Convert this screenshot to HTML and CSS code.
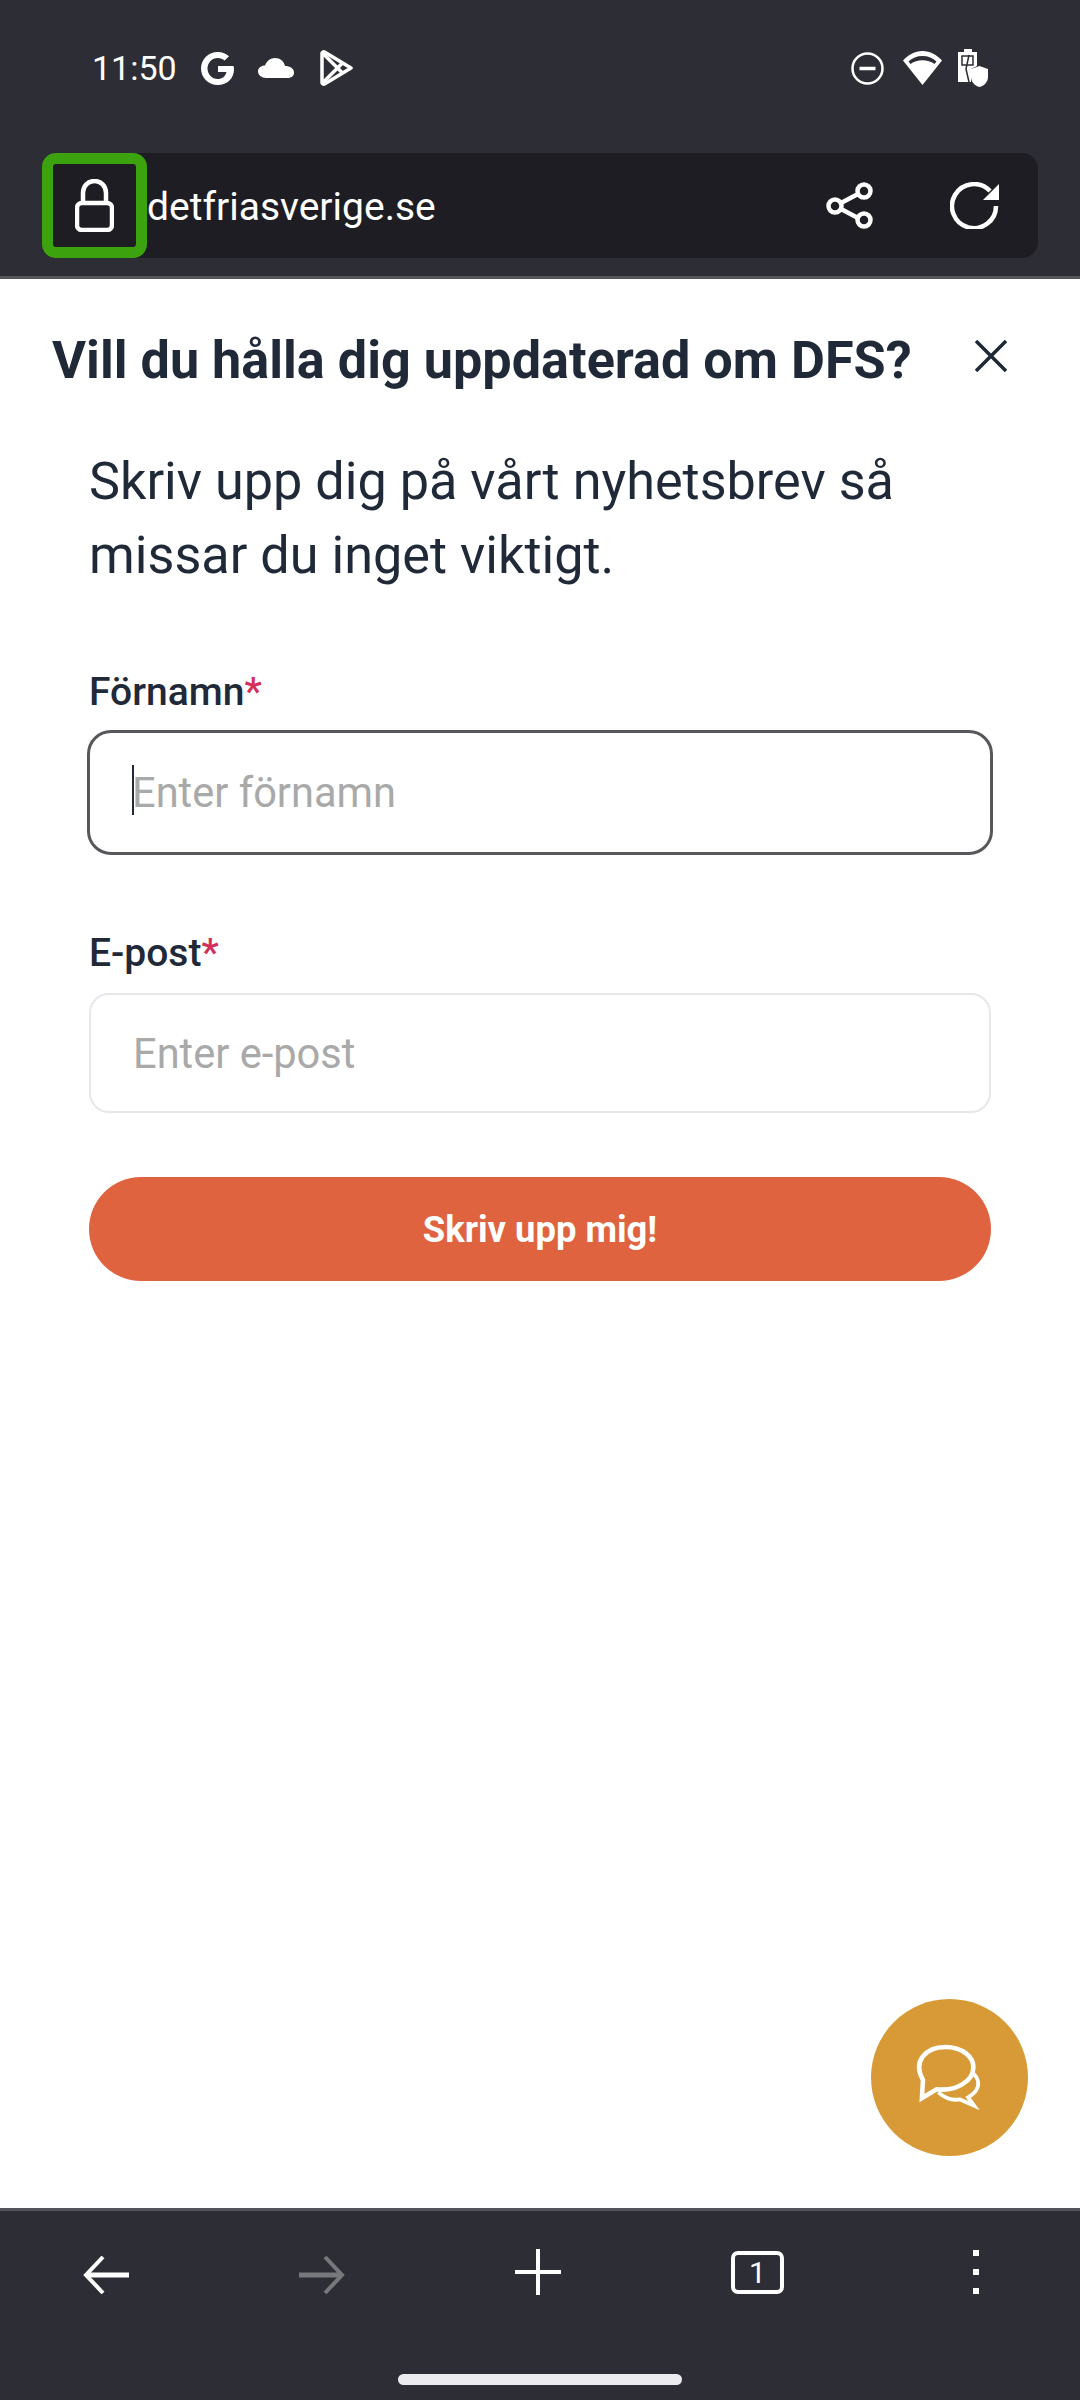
FILE: index.html
```html
<!DOCTYPE html>
<html>
<head>
    <title>detfriasverige.se</title>
    <link rel="stylesheet" href="styles.css">
</head>
<body>
<div class="phone">
    <header class="topbar">
        <div class="status">
            <span class="time">11:50</span>
            <svg class="ic-g" viewBox="0 0 33 33"><path d="M31.500 14H17v6h8.500C24 25 20.800 27 16.800 27 11 27 6.500 22.300 6.500 16.500S11 6 16.800 6c2.800 0 5 1 6.900 2.600l4.300-4.300C25.300 1.800 21.400 0 16.800 0 7.500 0 0 7.400 0 16.500S7.500 33 16.800 33C26.300 33 33 26.400 33 17c0-1-.2-2-.5-3z" fill="#fff"/></svg>
            <svg class="ic-cloud" viewBox="0 0 36 20"><path d="M8 20C3.500 20 0 17 0 13.500S3 7.500 7 7.500C8.500 3 12.500 0 17 0c5 0 9 3 10 8 5 0 9 2.500 9 6.500S33 20 29 20z" fill="#fff"/></svg>
            <svg class="ic-play" viewBox="0 0 33 36" fill="none" stroke="#fff" stroke-width="3.500" stroke-linejoin="round"><path d="M2 3.500C2 2 3.500 1.500 4.500 2L31 18 4.500 34C3.500 34.500 2 34 2 32.500z"/><path d="M2.500 3l20 20M2.500 33l20-20"/></svg>
            <div class="status-right">
                <svg class="ic-dnd" viewBox="0 0 33 33" fill="none" stroke="#fff" stroke-width="2.500"><circle cx="16.500" cy="16.500" r="15"/><path d="M8.500 16.500h16" stroke-width="3.500"/></svg>
                <svg class="ic-wifi" viewBox="0 0 39 34"><path d="M19.500 34L0 9.500C5 4 12 0 19.500 0S34 4 39 9.500zM19.500 5C14 5 9 7 5.500 10.500l2 2.500C11 10.500 15 9.300 19.500 9.300s8.500 1.200 12 3.700l2-2.500C30 7 25 5 19.500 5z" fill="#fff" fill-rule="evenodd"/></svg>
                <svg class="ic-batt" viewBox="0 0 30 38"><path d="M6 0h8v3h5v14l-6 3v13H0V3h6z" fill="#fff"/><path d="M4 7h11v9H4z" fill="none" stroke="#2d2d35" stroke-width="1.500"/><path d="M11 6L8 20l3 13" fill="none" stroke="#2d2d35" stroke-width="1.500"/><path d="M21.500 17L30 20v8c0 5-4 9-8.500 10C17 37 13 33 13 28v-8z" fill="#fff"/></svg>
            </div>
        </div>
        <div class="addressbar">
            <div class="lockbox">
                <svg class="ic-lock" viewBox="0 0 39 53" fill="none" stroke="#fff" stroke-width="4.500"><rect x="2" y="24" width="35" height="27" rx="5"/><path d="M8 24V14C8 7 13 2 19.500 2S31 7 31 14V24"/></svg>
            </div>
            <span class="url">detfriasverige.se</span>
            <svg class="ic-share" viewBox="0 0 47 47" fill="none" stroke="#fff" stroke-width="4.500"><circle cx="9" cy="24" r="6.500"/><circle cx="38" cy="9" r="6.500"/><circle cx="38" cy="38" r="6.500"/><path d="M15 21l17-9M15 27l17 9"/></svg>
            <svg class="ic-reload" viewBox="0 0 51 47" fill="none"><path d="M40 9A22 22 0 1 0 46 24" stroke="#fff" stroke-width="4.500"/><path d="M49 2V18H33z" fill="#fff"/></svg>
        </div>
    </header>

    <main class="content">
        <div class="modal-head">
            <h2 class="title">Vill du hålla dig uppdaterad om DFS?</h2>
            <svg class="ic-close" viewBox="0 0 32 32" fill="none" stroke="#1f2937" stroke-width="3.500"><path d="M1 1l30 30M31 1L1 31"/></svg>
        </div>
        <form class="signup">
            <p class="lead">Skriv upp dig på vårt nyhetsbrev så missar du inget viktigt.</p>
            <label class="lbl">Förnamn<span class="req">*</span></label>
            <div class="field">
                <input class="inp focused" placeholder="Enter förnamn">
                <span class="caret"></span>
            </div>
            <label class="lbl lbl2">E-post<span class="req">*</span></label>
            <div class="field">
                <input class="inp" placeholder="Enter e-post">
            </div>
            <button class="submit" type="button">Skriv upp mig!</button>
        </form>
        <div class="fab">
            <svg class="ic-chat" viewBox="225 250 205 200" fill="none" stroke="#fff" stroke-width="13"><path d="M256 358C225 305 265 264 320 264C368 264 400 292 400 322C400 362 350 392 295 385L253 410Z"/><path d="M398 338C422 360 420 388 385 408L402 432L362 414C340 418 318 410 300 394" stroke-width="11"/></svg>
        </div>
    </main>

    <nav class="navbar">
        <div class="navicons">
            <svg class="ic-arrow" viewBox="0 0 46 38" fill="none" stroke="#fff" stroke-width="4"><path d="M46 19H3" stroke-width="5"/><path d="M20 1L3 19L20 37"/></svg>
            <svg class="ic-arrow" viewBox="0 0 46 38" fill="none" stroke="#77777c" stroke-width="4"><path d="M0 19H43" stroke-width="5"/><path d="M26 1L43 19L26 37"/></svg>
            <svg class="ic-plus" viewBox="0 0 46 46" stroke="#fff" stroke-width="4"><path d="M23 0V46M0 23H46"/></svg>
            <div class="tabs">1</div>
            <div class="dots"><i></i><i></i><i></i></div>
        </div>
        <div class="homepill"></div>
    </nav>
</div>
</body>
</html>
```

FILE: styles.css
```css
body, html {
    margin: 0;
    padding: 0;
}

.phone {
    width: 1080px;
    height: 2400px;
    display: flex;
    flex-direction: column;
    font-family: Roboto, sans-serif;
    background: #fff;
}

/* top chrome */
.topbar {
    box-sizing: border-box;
    height: 279px;
    background: #2d2d35;
    border-bottom: 3px solid #55555b;
    padding: 49px 42px 0;
}

.status {
    height: 38px;
    display: flex;
    align-items: center;
    padding: 0 50px 0 50px;
    color: #fff;
}

.time { font-size: 34px; width: 109px; }
.ic-g { width: 33px; height: 33px; margin-right: 24px; }
.ic-cloud { width: 36px; height: 20px; margin-right: 26px; }
.ic-play { width: 33px; height: 36px; }

.status-right {
    margin-left: auto;
    display: flex;
    align-items: center;
}
.ic-dnd { width: 33px; height: 33px; margin-right: 19px; }
.ic-wifi { width: 39px; height: 34px; margin-right: 16px; }
.ic-batt { width: 30px; height: 38px; }

.addressbar {
    margin-top: 66px;
    height: 105px;
    background: #1d1d23;
    border-radius: 16px;
    display: flex;
    align-items: center;
}

.lockbox {
    box-sizing: border-box;
    width: 105px;
    height: 105px;
    border: 11px solid #3ca30e;
    border-radius: 14px;
    display: flex;
    align-items: center;
    justify-content: center;
}
.ic-lock { width: 39px; height: 53px; }

.url {
    flex: 1;
    margin: 2px 0 0;
    font-size: 39px;
    color: #fff;
}

.ic-share { width: 47px; height: 47px; margin-right: 77px; }
.ic-reload { width: 51px; height: 47px; margin-right: 37px; }

/* modal */
.content {
    flex: 1;
    position: relative;
}

.modal-head {
    display: flex;
    align-items: center;
    justify-content: space-between;
    padding: 52px 73px 0 52px;
}

.title {
    margin: 0;
    font-size: 52.200px;
    font-weight: 700;
    line-height: 60px;
    color: #1f2937;
}

.ic-close { width: 32px; height: 32px; margin-bottom: 10px; }

.signup { padding: 54px 89px 0; }

.lead {
    margin: 0;
    font-size: 52.200px;
    line-height: 74px;
    color: #1f2937;
}

.lbl {
    display: block;
    margin-top: 76px;
    font-size: 39px;
    font-weight: 500;
    line-height: 46px;
    color: #1f2937;
}
.lbl2 { margin-top: 75px; }
.req { color: #d32f5a; }

.field {
    position: relative;
    margin-top: 17px;
}

.inp {
    display: block;
    box-sizing: border-box;
    width: 902px;
    height: 120px;
    padding: 0 42px;
    border: 2px solid #e5e7eb;
    border-radius: 20px;
    background: #fff;
    outline: none;
    font-family: Roboto, sans-serif;
    font-size: 41.6px;
    color: #1f2937;
}
.inp::placeholder { color: #a9a9a9; opacity: 1; }

.inp.focused {
    width: 906px;
    height: 125px;
    margin: -2px 0 0 -2px;
    padding: 0 42px;
    border: 3px solid #56585c;
    border-radius: 24px;
}

.caret {
    position: absolute;
    left: 43px;
    top: 35px;
    width: 2px;
    height: 50px;
    background: #1f2937;
}

.submit {
    display: block;
    width: 902px;
    height: 104px;
    margin-top: 64px;
    border: none;
    border-radius: 52px;
    background: #e06340;
    color: #fff;
    font-family: Roboto, sans-serif;
    font-size: 36.400px;
    font-weight: 700;
}

.fab {
    position: absolute;
    left: 871px;
    bottom: 52px;
    width: 157px;
    height: 157px;
    border-radius: 50%;
    background: #d79a37;
    display: flex;
    align-items: center;
    justify-content: center;
}
.ic-chat { width: 72px; height: 70px; margin: 0 0 2px -4px; }

/* bottom chrome */
.navbar {
    height: 189px;
    background: #2d2d35;
    border-top: 3px solid #55555b;
}

.navicons {
    display: flex;
    align-items: center;
    height: 46px;
    margin-top: 38px;
    padding: 0 101px 0 83px;
    gap: 170px;
}

.ic-arrow { width: 46px; height: 38px; margin-top: 6px; }
.ic-plus { width: 46px; height: 46px; }

.tabs {
    box-sizing: border-box;
    width: 53px;
    height: 43px;
    border: 4px solid #fff;
    border-radius: 7px;
    color: #fff;
    font-size: 30px;
    line-height: 35px;
    text-align: center;
}

.dots {
    margin-left: auto;
    display: flex;
    flex-direction: column;
    gap: 13px;
}
.dots i {
    display: block;
    width: 6px;
    height: 6px;
    background: #fff;
}

.homepill {
    width: 284px;
    height: 11px;
    margin: 79px auto 0;
    border-radius: 6px;
    background: #ecebf0;
}
```
